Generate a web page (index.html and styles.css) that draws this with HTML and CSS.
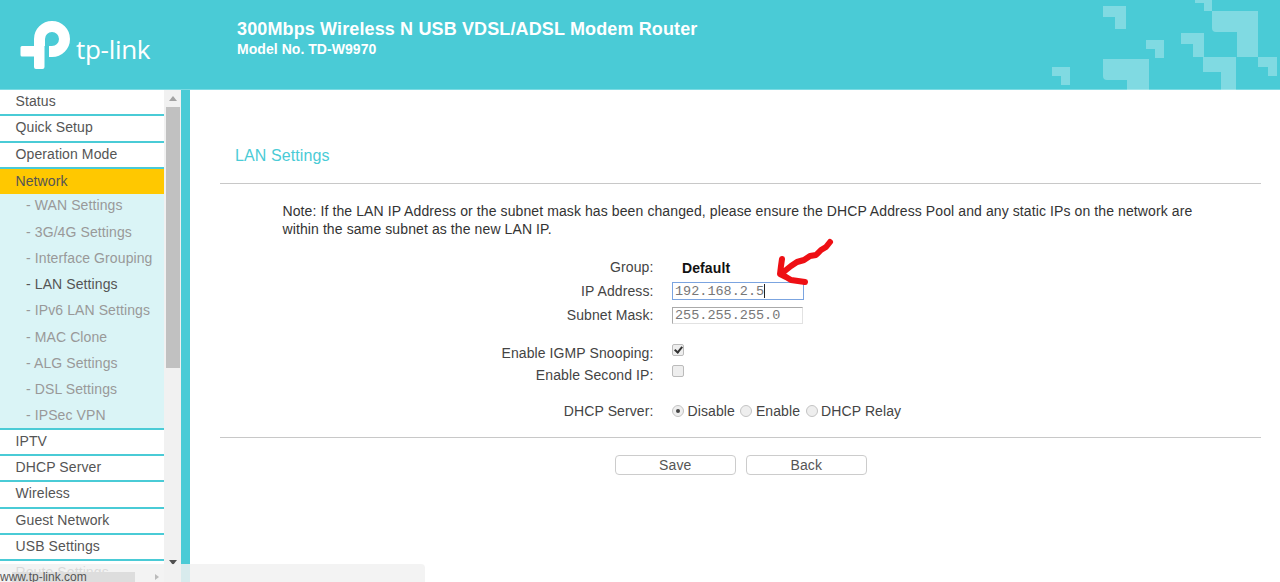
FILE: index.html
```html
<!DOCTYPE html>
<html>
<head>
    <meta charset="UTF-8">
    <meta name="viewport" content="width=device-width, initial-scale=1.0">
    <title>LAN Settings</title>
    <link rel="stylesheet" href="styles.css">
</head>
<body>
    <header class="top">
        <div class="logo">
            <svg class="logo-mark" width="52" height="52" viewBox="20 20 52 52">
                <path d="M39.5 46 V39 a12.5 12.5 0 0 1 25 0 a12.5 12.5 0 0 1 -12.5 12.5 H49" fill="none" stroke="#fff" stroke-width="11"/>
                <path d="M22 46 H44.5 V67 a2 2 0 0 1 -2 2 H36 a2 2 0 0 1 -2 -2 V56.500 H22 a1.500 1.500 0 0 1 -1.500 -1.500 V47.500 a1.500 1.500 0 0 1 1.500 -1.500 Z" fill="#fff"/>
            </svg>
            <span class="logo-name">tp-link</span>
        </div>
        <div class="top-text">
            <div class="product">300Mbps Wireless N USB VDSL/ADSL Modem Router</div>
            <div class="model">Model No. TD-W9970</div>
        </div>
        <svg class="top-pattern" width="280" height="90" viewBox="0 0 280 90">
            <g fill="#fff" fill-opacity="0.3">
                <path d="M103 6 H126 V29 H115 V17 H103 Z"/>
                <path d="M146 40 H164 V58 H155 V49 H146 Z"/>
                <path d="M181 33 H204 V57 H193 V44 H181 Z"/>
                <path d="M212 11 H258 V57 H237 V32 H216 Q212 32 212 28 Z"/>
                <path d="M195 0 H212 V11 H204 V3 H195 Z"/>
                <path d="M203 57 H236 V90 H221 V72 H203 Z"/>
                <path d="M258 57 H277 V76 H268 V67 H258 Z"/>
                <path d="M103 59 H149 V90 H127 V80 H107 Q103 80 103 76 Z"/>
                <path d="M52 67 H70 V85 H61 V76 H52 Z"/>
            </g>
        </svg>
    </header>

    <div class="page">
        <nav class="side">
            <div class="menu">
                <a class="item">Status</a>
                <a class="item">Quick Setup</a>
                <a class="item">Operation Mode</a>
                <a class="item active">Network</a>
                <a class="sub">- WAN Settings</a>
                <a class="sub">- 3G/4G Settings</a>
                <a class="sub">- Interface Grouping</a>
                <a class="sub current">- LAN Settings</a>
                <a class="sub">- IPv6 LAN Settings</a>
                <a class="sub">- MAC Clone</a>
                <a class="sub">- ALG Settings</a>
                <a class="sub">- DSL Settings</a>
                <a class="sub last">- IPSec VPN</a>
                <a class="item">IPTV</a>
                <a class="item">DHCP Server</a>
                <a class="item">Wireless</a>
                <a class="item">Guest Network</a>
                <a class="item">USB Settings</a>
                <a class="item">Route Settings</a>
            </div>
            <div class="scrollbar">
                <div class="arrow-up"></div>
                <div class="thumb"></div>
                <div class="arrow-down"></div>
            </div>
        </nav>

        <main class="content">
            <h1 class="title">LAN Settings</h1>
            <hr class="line">
            <p class="note">Note: If the LAN IP Address or the subnet mask has been changed, please ensure the DHCP Address Pool and any static IPs on the network are within the same subnet as the new LAN IP.</p>

            <div class="group first">
                <div class="row">
                    <span class="label">Group:</span>
                    <b class="value">Default</b>
                </div>
                <div class="row">
                    <span class="label">IP Address:</span>
                    <div class="field focused">192.168.2.5<span class="caret"></span></div>
                </div>
                <div class="row">
                    <span class="label">Subnet Mask:</span>
                    <div class="field">255.255.255.0</div>
                </div>
            </div>

            <div class="group checks">
                <div class="row short">
                    <span class="label">Enable IGMP Snooping:</span>
                    <input class="check" type="checkbox" checked>
                </div>
                <div class="row short">
                    <span class="label">Enable Second IP:</span>
                    <input class="check" type="checkbox">
                </div>
            </div>

            <div class="group dhcp">
                <div class="row">
                    <span class="label">DHCP Server:</span>
                    <label class="choice"><input class="radio" type="radio" name="dhcp" checked>Disable</label>
                    <label class="choice"><input class="radio" type="radio" name="dhcp">Enable</label>
                    <label class="choice"><input class="radio" type="radio" name="dhcp">DHCP Relay</label>
                </div>
            </div>

            <hr class="line lower">
            <div class="buttons">
                <button>Save</button>
                <button>Back</button>
            </div>

            <svg class="scribble" width="70" height="55" viewBox="770 235 70 55">
                <path d="M830 242 L826 247 L821 250 L816 255 L810 256 L804 260 L797 262 L791 266 L786 270 L781 274 M782 259 L781 266 L780 274 L786 277 L791 280 L798 281 L805 282" fill="none" stroke="#ee0f14" stroke-width="6" stroke-linecap="round" stroke-linejoin="round"/>
            </svg>
        </main>
    </div>

    <div class="statusbar">
        <span class="url">www.tp-link.com</span>
        <span class="more"></span>
    </div>
</body>
</html>
```

FILE: styles.css
```css
html, body {
    height: 100%;
}
body {
    font-family: "Liberation Sans", Arial, sans-serif;
    font-size: 14px;
    letter-spacing: 0.1px;
    margin: 0;
    overflow: hidden;
    background-color: #4acbd6;
    color: #333;
}

/* header */
.top {
    position: relative;
    display: flex;
    height: 90px;
    box-sizing: border-box;
    border-bottom: 1px solid #7cdbe3;
    color: white;
}
.logo {
    display: flex;
    width: 237px;
    padding: 20px 0 0 20px;
    box-sizing: border-box;
}
.logo-mark {
    flex: none;
}
.logo-name {
    font-family: "Open Sans", sans-serif;
    font-weight: 400;
    font-size: 26px;
    line-height: 30px;
    margin: 14px 0 0 4px;
    letter-spacing: -0.3px;
}
.top-text {
    padding-top: 18px;
}
.product {
    font-size: 18px;
    font-weight: bold;
    line-height: 22px;
    letter-spacing: 0.13px;
}
.model {
    font-size: 14px;
    font-weight: bold;
    line-height: 18px;
    letter-spacing: 0.05px;
}
.top-pattern {
    position: absolute;
    top: 0;
    right: 0;
}

.page {
    display: flex;
    height: 492px;
}

/* left menu */
.side {
    display: flex;
    flex: none;
    width: 181px;
    margin-right: 9px;
    background-color: white;
}
.menu {
    width: 164px;
    overflow: hidden;
}
.item, .sub {
    display: block;
    box-sizing: border-box;
    height: 26.25px;
    line-height: 23.5px;
    white-space: nowrap;
}
.item {
    padding-left: 15.5px;
    color: #555;
    border-bottom: 2px solid #4acbd6;
}
.item.active {
    height: 25.5px;
    background-color: #ffc800;
    border-bottom: none;
    line-height: 24px;
}
.sub {
    padding-left: 26px;
    color: #999;
    background-color: #daf4f6;
    line-height: 22.5px;
}
.sub.current {
    color: #555;
}
.sub.last {
    height: 25.5px;
    border-bottom: 2px solid #4acbd6;
}
.scrollbar {
    display: flex;
    flex-direction: column;
    align-items: center;
    width: 17px;
    background-color: #f1f1f1;
}
.arrow-up, .arrow-down {
    width: 0;
    height: 0;
    border-left: 4px solid transparent;
    border-right: 4px solid transparent;
}
.arrow-up {
    margin: 6px 0 6px;
    border-bottom: 5px solid #a3a3a3;
}
.thumb {
    width: 14px;
    height: 261px;
    background-color: #c1c1c1;
}
.arrow-down {
    margin-top: auto;
    margin-bottom: 17px;
    border-top: 5px solid #505050;
}

/* main panel */
.content {
    position: relative;
    flex: 1;
    box-sizing: border-box;
    padding: 0 19px 0 30px;
    background-color: white;
}
.title {
    margin: 0;
    padding: 56px 0 17px 15px;
    font-size: 16px;
    font-weight: normal;
    line-height: 20px;
    color: #4acbd6;
}
.line {
    height: 1px;
    margin: 0;
    border: none;
    background-color: #c8c8c8;
}
.line.lower {
    margin-top: 15px;
}
.note {
    width: 925px;
    margin: 18px 0 17px 62.5px;
    line-height: 18px;
}
.row {
    display: flex;
    align-items: center;
    height: 24px;
}
.row.short {
    height: 22px;
}
.label {
    flex: none;
    width: 433.5px;
    margin-right: 18.5px;
    text-align: right;
    color: #444;
}
.value {
    padding: 1px 0 0 10px;
    color: #111;
}
.field {
    display: flex;
    align-items: center;
    box-sizing: border-box;
    width: 131px;
    height: 17px;
    padding-left: 2px;
    font-family: "Liberation Mono", monospace;
    font-size: 13.5px;
    letter-spacing: 0;
    color: #777;
    border: 1px solid #e2e2e2;
    border-top-color: #aaa;
    border-left-color: #aaa;
}
.field.focused {
    width: 132px;
    height: 18px;
    border: 1.5px solid #7ba4e0;
}
.caret {
    width: 1px;
    height: 14px;
    background-color: #222;
}
.checks {
    margin-top: 15px;
}
.check {
    appearance: none;
    position: relative;
    width: 12px;
    height: 12px;
    margin: -7px 0 0 0;
    border: 1px solid #bbb;
    border-radius: 2px;
    background-color: #eee;
}
.row + .row .check {
    margin-top: -9px;
}
.check:checked::after {
    content: "";
    position: absolute;
    left: 3px;
    top: 0;
    width: 3px;
    height: 6px;
    border: solid #333;
    border-width: 0 2px 2px 0;
    transform: rotate(40deg);
}
.dhcp {
    margin-top: 12px;
}
.dhcp .row {
    padding-top: 1px;
    box-sizing: border-box;
}
.choice {
    display: flex;
    align-items: center;
    margin-right: 5.5px;
    color: #444;
}
.radio {
    appearance: none;
    position: relative;
    width: 12px;
    height: 12px;
    margin: 0 3.5px 0 0;
    border: 1px solid #c4c4c4;
    border-radius: 50%;
    background-color: #eee;
}
.radio:checked::after {
    content: "";
    position: absolute;
    left: 3px;
    top: 3px;
    width: 4px;
    height: 4px;
    border-radius: 50%;
    background-color: #444;
}
.buttons {
    display: flex;
    gap: 10.5px;
    margin-top: 17px;
    padding-left: 395px;
}
button {
    box-sizing: border-box;
    width: 120.5px;
    height: 19.5px;
    padding: 0;
    font-family: inherit;
    font-size: 14px;
    letter-spacing: inherit;
    line-height: 16px;
    color: #555;
    background-color: white;
    border: 1.5px solid #ccc;
    border-radius: 4px;
}

/* hand drawn mark over the form */
.scribble {
    position: absolute;
    left: 580px;
    top: 145px;
}

/* browser link preview, sits over the page */
.statusbar {
    position: absolute;
    left: 0;
    bottom: 0;
    display: flex;
    align-items: flex-end;
    width: 425px;
    height: 18px;
    background-color: rgba(241, 241, 241, 0.85);
    border-radius: 0 4px 0 0;
}
.url {
    width: 135px;
    height: 10px;
    font-size: 12px;
    line-height: 10px;
    letter-spacing: 0;
    color: #555;
    background: linear-gradient(to right, transparent 12px, #ddd 12px);
}
.more {
    width: 0;
    height: 0;
    margin: 0 0 2px 20px;
    border-top: 3px solid transparent;
    border-bottom: 3px solid transparent;
    border-left: 4px solid #bbb;
}
```
